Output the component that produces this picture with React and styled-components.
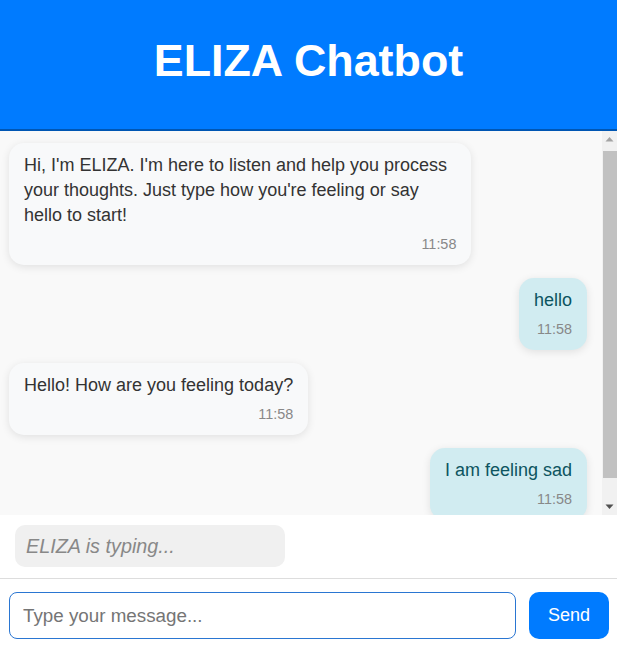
import styled, { createGlobalStyle } from "styled-components";

const GlobalStyle = createGlobalStyle`
  html, body {
    margin: 0;
    padding: 0;
    height: 100%;
    overflow: hidden;
  }
  body {
    font-family: "Liberation Sans", Arial, sans-serif;
    background: #ffffff;
  }
  #root {
    height: 100%;
  }
`;

const messages = [
  {
    id: 1,
    from: "bot",
    text: "Hi, I'm ELIZA. I'm here to listen and help you process your thoughts. Just type how you're feeling or say hello to start!",
    time: "11:58",
  },
  { id: 2, from: "user", text: "hello", time: "11:58" },
  { id: 3, from: "bot", text: "Hello! How are you feeling today?", time: "11:58" },
  { id: 4, from: "user", text: "I am feeling sad", time: "11:58" },
];

// classic scrollbar arrow
function Arrow({ down, color }) {
  return (
    <svg width="15" height="17" viewBox="0 0 15 17">
      <path d={down ? "M3.5 6.5h8l-4 4.5z" : "M3.5 10.5h8l-4-4.5z"} fill={color} />
    </svg>
  );
}

export default function App() {
  return (
    <>
      <GlobalStyle />
      <Page>
        <Header>
          <Title>ELIZA Chatbot</Title>
        </Header>
        <ChatArea>
          <ChatWindow>
            {messages.map((m) => (
              <Bubble key={m.id} $user={m.from === "user"}>
                <BubbleText>{m.text}</BubbleText>
                <Time>{m.time}</Time>
              </Bubble>
            ))}
          </ChatWindow>
          <ScrollTrack>
            <ScrollButton>
              <Arrow color="#a3a3a3" />
            </ScrollButton>
            <ThumbLane>
              <Thumb />
            </ThumbLane>
            <ScrollButton>
              <Arrow down color="#505050" />
            </ScrollButton>
          </ScrollTrack>
        </ChatArea>
        <TypingRow>
          <Typing>ELIZA is typing...</Typing>
        </TypingRow>
        <InputBar>
          <MessageInput placeholder="Type your message..." />
          <SendButton>Send</SendButton>
        </InputBar>
      </Page>
    </>
  );
}

const Page = styled.div`
  display: flex;
  flex-direction: column;
  height: 100vh;
`;

const Header = styled.header`
  flex: 0 0 auto;
  height: 129px;
  box-sizing: content-box;
  background-color: #007bff;
  border-bottom: 2px solid #0056b3;
  display: flex;
  align-items: center;
  justify-content: center;
`;

const Title = styled.h1`
  margin: 0 0 8px 0;
  color: #ffffff;
  font-size: 44.8px;
  font-weight: bold;
`;

const ChatArea = styled.div`
  flex: 1 1 auto;
  min-height: 0;
  display: flex;
  background-color: #f9f9f9;
`;

const ChatWindow = styled.div`
  flex: 1 1 auto;
  min-width: 0;
  overflow: hidden;
  padding: 12px 15px 12px 9px;
  display: flex;
  flex-direction: column;
  gap: 13px;
`;

const ScrollTrack = styled.div`
  flex: 0 0 15px;
  display: flex;
  flex-direction: column;
  background-color: #f1f1f1;
`;

const ScrollButton = styled.div`
  flex: 0 0 17px;
  display: flex;
  align-items: center;
  justify-content: center;
`;

const ThumbLane = styled.div`
  flex: 1 1 auto;
  padding: 3px 0 0 1px;
`;

const Thumb = styled.div`
  height: 327px;
  background-color: #c1c1c1;
`;

const Bubble = styled.div`
  flex: 0 0 auto;
  max-width: 80%;
  box-sizing: border-box;
  padding: 10px 15px 11px;
  border-radius: 15px;
  align-self: ${(p) => (p.$user ? "flex-end" : "flex-start")};
  background-color: ${(p) => (p.$user ? "#d1ecf1" : "#f8f9fa")};
  color: ${(p) => (p.$user ? "#0c5460" : "#333333")};
  box-shadow: 0 2px 8px rgba(0, 0, 0, 0.1);
  text-align: ${(p) => (p.$user ? "right" : "left")};
`;

const BubbleText = styled.div`
  font-size: 18px;
  line-height: 25px;
`;

const Time = styled.div`
  margin-top: 6px;
  font-size: 14.4px;
  line-height: 20px;
  color: #888888;
  text-align: right;
`;

const TypingRow = styled.div`
  flex: 0 0 auto;
  background: #ffffff;
  padding: 10px 15px 11px;
  border-bottom: 1px solid #dddddd;
`;

const Typing = styled.div`
  width: 270px;
  box-sizing: border-box;
  padding: 10px 11px;
  border-radius: 10px;
  background-color: #f0f0f0;
  color: #888888;
  font-style: italic;
  font-size: 19.8px;
  line-height: 22px;
`;

const InputBar = styled.div`
  flex: 0 0 auto;
  display: flex;
  gap: 13px;
  padding: 13px 8px 8px 9px;
  background: #ffffff;
`;

const MessageInput = styled.input`
  flex: 1;
  height: 47px;
  box-sizing: border-box;
  padding: 0 13px;
  border: 1px solid #2a76d2;
  border-radius: 8px;
  font-family: "Liberation Sans", Arial, sans-serif;
  font-size: 18.8px;
  color: #333333;
  outline: none;
  &::placeholder {
    color: #757575;
  }
`;

const SendButton = styled.button`
  flex: 0 0 auto;
  width: 80px;
  height: 47px;
  border: none;
  border-radius: 10px;
  background-color: #007bff;
  color: #ffffff;
  font-family: "Liberation Sans", Arial, sans-serif;
  font-size: 18px;
  cursor: pointer;
`;
